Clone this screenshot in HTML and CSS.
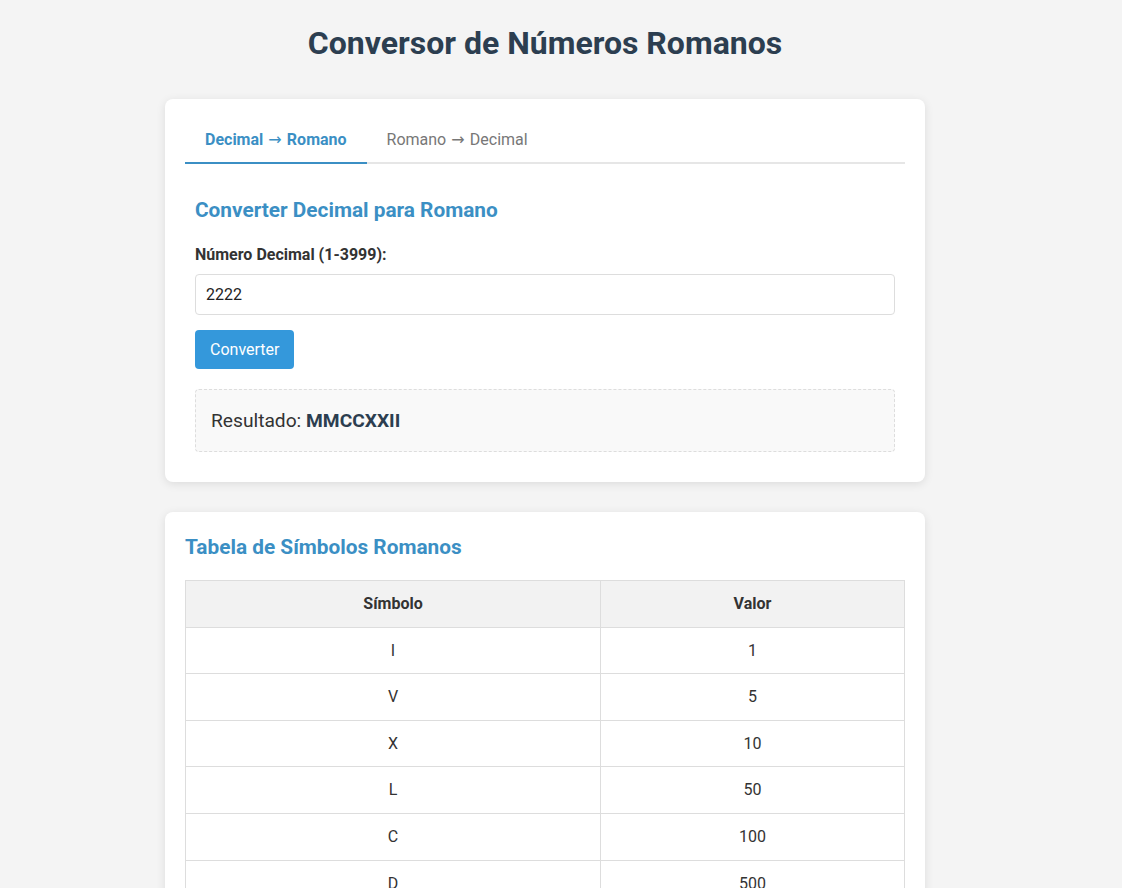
FILE: index.html
```html
<!DOCTYPE html>
<html lang="pt">
<head>
<meta charset="utf-8">
<title>Conversor de Números Romanos</title>
<link rel="stylesheet" href="styles.css">
</head>
<body>
<div class="container">
  <h1 class="title">Conversor de Números Romanos</h1>

  <section class="card">
    <div class="tabs">
      <button class="tab active">Decimal<span class="arrow"> → </span>Romano</button>
      <button class="tab">Romano<span class="arrow"> → </span>Decimal</button>
    </div>
    <div class="tab-content">
      <h2 class="section-title">Converter Decimal para Romano</h2>
      <label class="label" for="dec">Número Decimal (1-3999):</label>
      <input id="dec" class="input" type="text" value="2222">
      <button class="btn">Converter</button>
      <div class="result">Resultado: <strong>MMCCXXII</strong></div>
    </div>
  </section>

  <section class="card">
    <h2 class="section-title table-title">Tabela de Símbolos Romanos</h2>
    <table class="symbols">
      <thead>
        <tr><th class="col-sym">Símbolo</th><th>Valor</th></tr>
      </thead>
      <tbody>
        <tr><td>I</td><td>1</td></tr>
        <tr><td>V</td><td>5</td></tr>
        <tr><td>X</td><td>10</td></tr>
        <tr><td>L</td><td>50</td></tr>
        <tr><td>C</td><td>100</td></tr>
        <tr><td>D</td><td>500</td></tr>
        <tr><td>M</td><td>1000</td></tr>
      </tbody>
    </table>
  </section>
</div>
</body>
</html>
```

FILE: styles.css
```css
* { box-sizing: border-box; }

body {
  margin: 0;
  padding: 0 32px 20px 0;
  background: #f4f4f4;
  font-family: Roboto, "Liberation Sans", sans-serif;
  color: #333;
}

.container {
  max-width: 760px;
  margin: 0 auto;
}

.title {
  margin: 0;
  padding: 24px 0 37px;
  text-align: center;
  font-size: 32px;
  font-weight: 700;
  color: #2c3e50;
  line-height: 38px;
}

.card {
  background: #fff;
  border-radius: 8px;
  box-shadow: 0 2px 10px rgba(0, 0, 0, 0.1);
  padding: 20px;
  margin-bottom: 30px;
}

.tabs {
  display: flex;
  border-bottom: 2px solid #e6e6e6;
}

.tab {
  background: none;
  border: none;
  border-bottom: 2px solid transparent;
  margin-bottom: -2px;
  padding: 11px 20px 12px;
  font-family: inherit;
  font-size: 16px;
  line-height: 20px;
  color: #777;
  cursor: pointer;
  white-space: pre;
}

.arrow {
  font-family: "DejaVu Sans", sans-serif;
  font-weight: 400;
  font-size: 16px;
}

.tab.active {
  color: #3b8fc4;
  font-weight: 700;
  border-bottom-color: #3b8fc4;
}

.tab-content {
  padding: 34px 10px 10px;
  display: flex;
  flex-direction: column;
  align-items: flex-start;
}

.section-title {
  margin: 0;
  font-size: 20.8px;
  font-weight: 700;
  color: #3b8fc4;
  line-height: 24px;
}

.label {
  display: block;
  margin-top: 23px;
  font-size: 16px;
  font-weight: 700;
  color: #333;
  line-height: 20px;
}

.input {
  width: 100%;
  margin-top: 9px;
  height: 41px;
  padding: 0 10px;
  border: 1px solid #ddd;
  border-radius: 4px;
  font-family: inherit;
  font-size: 16px;
  color: #222;
}

.btn {
  margin-top: 15px;
  height: 39px;
  padding: 0 15px;
  background: #3498db;
  color: #fff;
  border: none;
  border-radius: 4px;
  font-family: inherit;
  font-size: 16px;
  cursor: pointer;
}

.result {
  width: 100%;
  margin-top: 20px;
  padding: 18px 15px;
  background: #f9f9f9;
  border: 1px dashed #ddd;
  border-radius: 4px;
  font-size: 19.2px;
  line-height: 25px;
  color: #333;
}

.result strong {
  color: #2c3e50;
}

.table-title {
  margin-top: 3px;
}

.symbols {
  width: 100%;
  margin-top: 21px;
  border-collapse: collapse;
  font-size: 16px;
}

.symbols th,
.symbols td {
  border: 1px solid #ddd;
  padding: 14px;
  text-align: center;
  line-height: 17.6px;
}

.symbols th {
  background: #f2f2f2;
  font-weight: 700;
  color: #333;
}

.symbols .col-sym {
  width: 415px;
}
```
